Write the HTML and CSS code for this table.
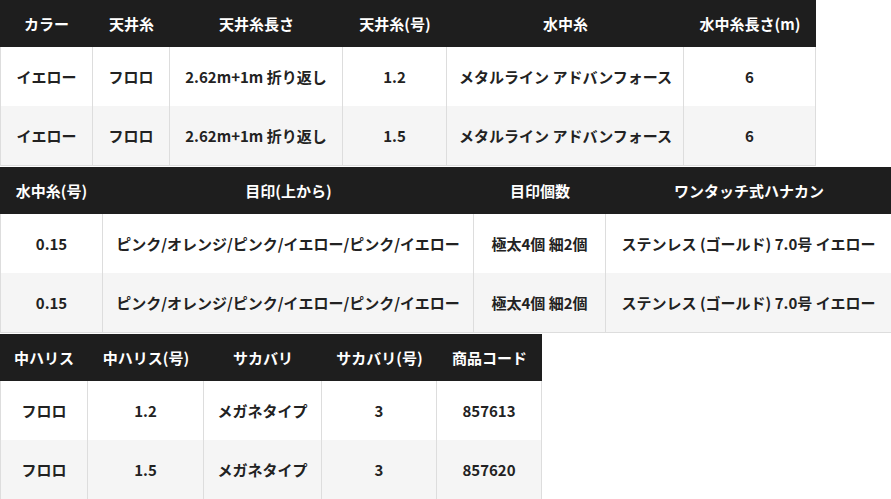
FILE: index.html
```html
<!DOCTYPE html>
<html lang="ja">
<head>
<meta charset="utf-8">
<link rel="stylesheet" href="styles.css">
</head>
<body>
<div class="specs">
  <table class="spec spec-1">
    <colgroup>
      <col class="w93"><col class="w77"><col class="w173"><col class="w104"><col class="w237"><col class="w132">
    </colgroup>
    <thead>
      <tr><th>カラー</th><th>天井糸</th><th>天井糸長さ</th><th>天井糸(号)</th><th>水中糸</th><th>水中糸長さ(m)</th></tr>
    </thead>
    <tbody>
      <tr><td>イエロー</td><td>フロロ</td><td>2.62m+1m 折り返し</td><td>1.2</td><td>メタルライン アドバンフォース</td><td>6</td></tr>
      <tr><td>イエロー</td><td>フロロ</td><td>2.62m+1m 折り返し</td><td>1.5</td><td>メタルライン アドバンフォース</td><td>6</td></tr>
    </tbody>
  </table>

  <table class="spec spec-2">
    <colgroup>
      <col class="w103"><col class="w371"><col class="w132"><col class="w286">
    </colgroup>
    <thead>
      <tr><th>水中糸(号)</th><th>目印(上から)</th><th>目印個数</th><th>ワンタッチ式ハナカン</th></tr>
    </thead>
    <tbody>
      <tr><td>0.15</td><td>ピンク/オレンジ/ピンク/イエロー/ピンク/イエロー</td><td>極太4個 細2個</td><td>ステンレス (ゴールド) 7.0号 イエロー</td></tr>
      <tr><td>0.15</td><td>ピンク/オレンジ/ピンク/イエロー/ピンク/イエロー</td><td>極太4個 細2個</td><td>ステンレス (ゴールド) 7.0号 イエロー</td></tr>
    </tbody>
  </table>

  <table class="spec spec-3">
    <colgroup>
      <col class="w88"><col class="w116"><col class="w118"><col class="w115"><col class="w105">
    </colgroup>
    <thead>
      <tr><th>中ハリス</th><th>中ハリス(号)</th><th>サカバリ</th><th>サカバリ(号)</th><th>商品コード</th></tr>
    </thead>
    <tbody>
      <tr><td>フロロ</td><td>1.2</td><td>メガネタイプ</td><td>3</td><td>857613</td></tr>
      <tr><td>フロロ</td><td>1.5</td><td>メガネタイプ</td><td>3</td><td>857620</td></tr>
    </tbody>
  </table>
</div>
</body>
</html>
```

FILE: styles.css
```css
html, body {
  margin: 0;
  padding: 0;
  background: #ffffff;
}

body {
  font-family: "Noto Sans CJK JP", "Noto Sans", sans-serif;
  font-weight: 700;
  font-size: 15px;
  color: #222222;
  overflow: hidden;
}

.specs {
  display: flex;
  flex-direction: column;
  align-items: flex-start;
  gap: 1px;
}

.spec {
  border-collapse: separate;
  border-spacing: 0;
  table-layout: fixed;
}

.spec-1 { width: 816px; }
.spec-2 { width: 892px; }
.spec-3 { width: 542px; }

.w77 { width: 77px; }
.w88 { width: 88px; }
.w93 { width: 93px; }
.w103 { width: 103px; }
.w104 { width: 104px; }
.w105 { width: 105px; }
.w115 { width: 115px; }
.w116 { width: 116px; }
.w118 { width: 118px; }
.w132 { width: 132px; }
.w173 { width: 173px; }
.w237 { width: 237px; }
.w286 { width: 286px; }
.w371 { width: 371px; }

.spec th,
.spec td {
  text-align: center;
  white-space: nowrap;
  line-height: 21px;
  padding: 0 12px;
}

.spec th {
  background: #1e1e1e;
  color: #ffffff;
  height: 47px;
}

.spec td {
  height: 59px;
  border-right: 1px solid #dddddd;
}

.spec td:first-child {
  border-left: 1px solid #dddddd;
}

.spec tbody tr:nth-child(2) td {
  background: #f5f5f5;
  border-bottom: 1px solid #dddddd;
}
```
